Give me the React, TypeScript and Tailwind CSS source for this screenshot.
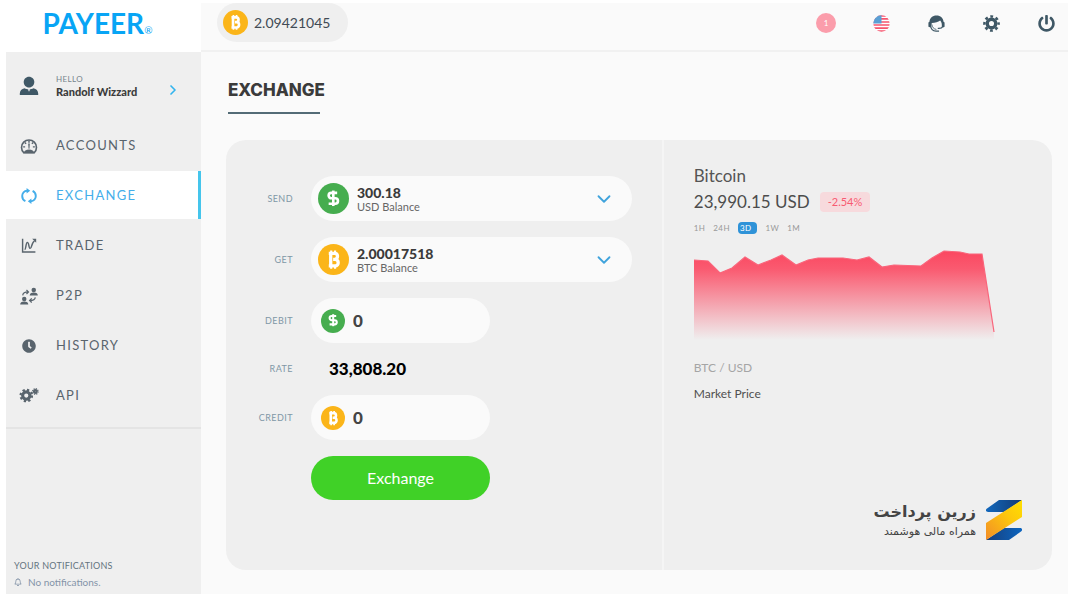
import React, { useState } from 'react';
import { clsx } from 'clsx';
import { ChevronDown, ChevronRight, DollarSign } from 'lucide-react';
import { FaClock, FaPowerOff, FaRegBell } from 'react-icons/fa';

type IconProps = { className?: string };

const UserIcon = ({ className }: IconProps) => (
    <svg viewBox="0 0 20 20" className={className} fill="currentColor" aria-hidden="true">
        <path d="M10 .8c3 0 5.300 2.300 5.300 5.300S13 11.600 10 11.600 4.700 9.100 4.700 6.100 7 .8 10 .8Z" />
        <path d="M5.500 12.200c1.200.7 2.700 1.200 4.500 1.200s3.300-.5 4.500-1.200c2.900.4 4.700 2.700 4.700 5.200V19H.8v-1.600c0-2.500 1.800-4.800 4.700-5.200Z" />
        <path d="m8.800 13.300 1.200 2.500 1.200-2.500Z" fill="#efefef" />
    </svg>
);

const GaugeIcon = ({ className }: IconProps) => (
    <svg viewBox="0 0 20 20" className={className} fill="none" stroke="currentColor" aria-hidden="true">
        <path d="M4.200 17.500A8.300 8.300 0 1 1 15.800 17.500Z" strokeWidth="1.800" />
        <path d="M10 4v2.300M5.300 6l1.500 1.500M14.700 6l-1.500 1.500M3.500 11h2.200M14.300 11h2.200" strokeWidth="1.600" />
        <path d="m10 13-.6-5.500h1.200Z" strokeWidth=".6" fill="currentColor" />
        <path d="M3.500 18c1-2.200 3.500-4 6.500-4s5.500 1.800 6.500 4Z" fill="currentColor" stroke="none" />
    </svg>
);

const SwapIcon = ({ className }: IconProps) => (
    <svg viewBox="0 0 20 20" className={className} fill="none" stroke="currentColor" strokeWidth="2.400" aria-hidden="true">
        <path d="M5.500 16.500C3 15.300 1.500 12.900 1.500 10c0-3.700 2.500-6.500 6-6.500" />
        <path d="M14.500 3.500c2.500 1.200 4 3.600 4 6.500 0 3.700-2.500 6.500-6 6.500" />
        <path d="m7 0 4.500 3.500L7 7ZM13 13l-4.500 3.500L13 20Z" fill="currentColor" stroke="none" />
    </svg>
);

const TradeIcon = ({ className }: IconProps) => (
    <svg viewBox="0 0 20 20" className={className} fill="none" stroke="currentColor" strokeWidth="1.800" aria-hidden="true">
        <path d="M2 1v16.500h16" />
        <path d="M4.500 14.500c2 0 1.300-9 3.500-9s1.500 7.500 3.500 7.500 1.800-8 5.500-9.500" />
        <path d="M14 1h5v5Z" fill="currentColor" stroke="none" />
    </svg>
);

const PeerIcon = ({ className }: IconProps) => (
    <svg viewBox="0 0 20 20" className={className} fill="currentColor" aria-hidden="true">
        <circle cx="15.300" cy="3.300" r="2.500" />
        <path d="M10.800 9.500c0-2.300 1.500-3.500 4.500-3.500s4.500 1.200 4.500 3.500Z" />
        <circle cx="4.700" cy="13.300" r="2.500" />
        <path d="M.2 19.500C.2 17.200 1.700 16 4.700 16s4.500 1.200 4.500 3.500Z" />
        <g fill="none" stroke="currentColor" strokeWidth="1.400">
            <path d="M3 9.300C3.300 6.800 5 5.500 9 5.500M7.200 3.300l2.200 2.200-2.200 2.200" />
            <path d="M17 11.500c-.3 2.500-2 3.500-6 3.500M13 12.600l-2.300 2.400 2.300 2.300" />
        </g>
    </svg>
);

const GearsIcon = ({ className }: IconProps) => (
    <svg viewBox="0 0 22 20" className={className} fill="none" stroke="currentColor" aria-hidden="true">
        <circle cx="8" cy="9.500" r="4" strokeWidth="3.400" />
        <circle cx="8" cy="9.500" r="6.300" strokeWidth="2.400" strokeDasharray="2.500 2.450" />
        <circle cx="18" cy="5" r="1.500" strokeWidth="2.400" />
        <circle cx="18" cy="5" r="3" strokeWidth="1.400" strokeDasharray="1.300 1.060" />
    </svg>
);

const CogIcon = ({ className }: IconProps) => (
    <svg viewBox="0 0 20 20" className={className} fill="none" stroke="currentColor" aria-hidden="true">
        <circle cx="10" cy="10" r="5" strokeWidth="4" />
        <circle cx="10" cy="10" r="8.300" strokeWidth="3" strokeDasharray="3.300 3.219" strokeDashoffset="1.650" />
    </svg>
);

const SupportIcon = ({ className }: IconProps) => (
    <svg viewBox="0 0 20 20" className={className} fill="none" stroke="currentColor" aria-hidden="true">
        <path d="M10 .5c4.800 0 8 3 8.300 7.300l1.200 1v5l-1.800 1-1.500-1c.4-3-.2-5.300-1.900-7.300C12 8 8.500 9.500 4.500 9.500L3.200 14.800l-2.700-1v-5l1.200-1C2 3.500 5.200.5 10 .5Z" fill="currentColor" stroke="none" />
        <path d="M3 12c.3 3.800 2.700 6.800 6.500 7h3.500" strokeWidth="1.500" />
        <path d="M4.500 11c.3 3.300 2.300 5.500 5.300 6" strokeWidth="1" />
        <path d="M17.500 13.500c-1 1.900-3 2.600-6 2.300" strokeWidth="1.500" />
    </svg>
);

const FlagIcon = ({ className }: IconProps) => (
    <svg viewBox="0 0 18 18" className={className} aria-hidden="true">
        <clipPath id="flag"><circle cx="9" cy="9" r="8.700" /></clipPath>
        <g clipPath="url(#flag)">
            <path fill="#fff" d="M0 0h18v18H0z" />
            <path stroke="#f6546e" strokeWidth="1.800" d="M0 1h18M0 4.200h18M0 7.400h18M0 10.600h18M0 13.800h18M0 17h18" />
            <path fill="#5a9fd4" d="M0 0h9v9H0z" />
        </g>
    </svg>
);

const Coin = ({ kind, className }: { kind: 'usd' | 'btc', className?: string }) => (
    <span className={clsx("flex shrink-0 items-center justify-center rounded-full text-white", kind === 'usd' ? 'bg-[#46ad4f]' : 'bg-[#fbb519]', className)}>
        {
            kind === 'usd' ? <DollarSign className="size-3/5" strokeWidth={3.4} strokeLinecap="butt" /> : (
                <svg viewBox="0 0 24 24" className="size-3/4" fill="none" stroke="currentColor" strokeWidth="3.400" aria-hidden="true">
                    <path d="M9 5.500v13M7 5.500h6c4 0 4 6.200 0 6.200h-1.500 2c4.300 0 4.300 6.800 0 6.800H7" />
                    <path d="M9.500 2.500v3M13.500 2.500v3M9.500 18.500v3M13.500 18.500v3" strokeWidth="2.200" />
                </svg>
            )
        }
    </span>
);

const NAV = [
    { name: 'ACCOUNTS', icon: <GaugeIcon className="size-[18px]" /> },
    { name: 'EXCHANGE', icon: <SwapIcon className="size-4" /> },
    { name: 'TRADE', icon: <TradeIcon className="size-4" /> },
    { name: 'P2P', icon: <PeerIcon className="size-[18px]" /> },
    { name: 'HISTORY', icon: <FaClock className="size-[14px]" /> },
    { name: 'API', icon: <GearsIcon className="size-5" /> },
];

function Sidebar() {
    return (
        <aside className="flex w-[195px] shrink-0 flex-col bg-[#efefef]">
            <a href="#" className="flex h-[49px] items-start justify-center bg-white pr-3 text-[#08a5f5]">
                <span className="text-[28px] leading-10 font-bold">PAYEER</span>
                <span className="self-end pb-4 text-[10px] leading-3">®</span>
            </a>
            <a href="#profile" className="flex h-[69px] items-center pr-5 pb-0.5 pl-[13px]">
                <UserIcon className="size-5 text-[#3f5866]" />
                <span className="ml-[17px] flex-1">
                    <span className="block text-[8px] leading-3 tracking-wider text-[#76848d]">HELLO</span>
                    <span className="block text-[11px] leading-3.5 font-black text-[#3c3c3c]">Randolf Wizzard</span>
                </span>
                <ChevronRight className="mt-2 size-4 text-[#32b4ee]" strokeWidth={2.5} />
            </a>
            <nav className="flex flex-col gap-0.5 border-b-2 border-[#e4e4e4] pb-2">
                {NAV.map((item) => (
                    <a
                        key={item.name}
                        href={'#' + item.name.toLowerCase()}
                        className={clsx("flex h-12 items-center gap-[17px] border-r-3 pt-0.5 pl-[13px] text-[13px] tracking-widest", item.name === 'EXCHANGE' ? 'border-[#45c5ec] bg-white text-[#45aeea]' : 'border-transparent text-[#59646d]')}
                    >
                        <span className="flex w-5 justify-center">{item.icon}</span>
                        {item.name}
                    </a>
                ))}
            </nav>
            <div className="mt-auto px-2 pb-1">
                <p className="text-[9px] leading-4 tracking-wide text-[#647480]">YOUR NOTIFICATIONS</p>
                <p className="flex items-center gap-1.5 text-[10px] leading-4 text-[#8494a8]">
                    <FaRegBell className="size-2" />
                    No notifications.
                </p>
            </div>
        </aside>
    );
}

function Header() {
    return (
        <header className="flex h-[49px] items-start justify-between border-b-2 border-[#f1f1f1] pr-3 pl-4">
            <div className="flex h-[39px] items-center gap-1.5 rounded-full bg-[#efefef] pr-[18px] pl-1.5 text-[14px] text-[#414b55]">
                <Coin kind="btc" className="size-[25px]" />
                2.09421045
            </div>
            <div className="flex h-10 items-center gap-[35px] text-[#3f5866]">
                <button aria-label="Notifications" className="flex size-5 items-center justify-center rounded-full bg-[#fb9dab] text-[8px] text-white">1</button>
                <button aria-label="Language" className="flex size-5 items-center justify-center"><FlagIcon className="size-[17px]" /></button>
                <button aria-label="Support" className="flex size-5 items-center justify-center"><SupportIcon className="size-[17px]" /></button>
                <button aria-label="Settings" className="flex size-5 items-center justify-center"><CogIcon className="size-[17px]" /></button>
                <button aria-label="Log out" className="flex size-5 items-center justify-center"><FaPowerOff className="size-[17px]" /></button>
            </div>
        </header>
    );
}

const labelStyle = "text-right text-[9px] tracking-wider text-[#8097a6]";

interface BalanceProps {
    id: string
    label: string
    kind: 'usd' | 'btc'
    amount: string
    caption: string
}

const BalanceSelect: React.FC<BalanceProps> = ({ id, label, kind, amount, caption }) => (
    <>
        <label htmlFor={id} className={labelStyle}>{label}</label>
        <div className="flex h-[45px] items-center rounded-full bg-[#fafafa] pr-[17px] pl-[7px]">
            <Coin kind={kind} className="size-[31px]" />
            <div className="ml-2 flex-1">
                <select id={id} className="block w-full appearance-none text-[14px] leading-4 font-black text-[#3b3b3b]">
                    <option>{amount}</option>
                </select>
                <p className="text-[11px] leading-3 text-[#666]">{caption}</p>
            </div>
            <ChevronDown className="size-[22px] text-[#3fa3dc]" />
        </div>
    </>
);

const AmountInput: React.FC<{ id: string, label: string, kind: 'usd' | 'btc' }> = ({ id, label, kind }) => {
    const [value, setValue] = useState('0');
    return (
        <>
            <label htmlFor={id} className={labelStyle}>{label}</label>
            <div className="flex h-[45px] w-[179px] items-center gap-2 rounded-full bg-[#fafafa] px-2.5">
                <Coin kind={kind} className="size-6" />
                <input id={id} value={value} onChange={(e) => setValue(e.target.value)} className="w-full min-w-0 text-[17px] font-black text-[#444] outline-none" />
            </div>
        </>
    );
};

function ExchangeForm() {
    return (
        <form onSubmit={(e) => e.preventDefault()} className="grid grid-cols-[67px_1fr] content-start items-center gap-x-[18px] gap-y-4 border-r-2 border-[#f5f5f5] pt-9 pr-[30px]">
            <BalanceSelect id="send" label="SEND" kind="usd" amount="300.18" caption="USD Balance" />
            <BalanceSelect id="get" label="GET" kind="btc" amount="2.00017518" caption="BTC Balance" />
            <AmountInput id="debit" label="DEBIT" kind="usd" />
            <span className={labelStyle}>RATE</span>
            <output className="pl-[18px] text-[17px] leading-5 font-black text-black">33,808.20</output>
            <AmountInput id="credit" label="CREDIT" kind="btc" />
            <button type="submit" className="col-start-2 h-11 w-[179px] rounded-full bg-[#40d127] text-[16px] text-white">Exchange</button>
        </form>
    );
}

const PRICE_LINE = "M0 12 14 13 26 25 38 20 51 9 64 17 77 12 88 7 102 17 114 12 124 10 149 10 163 12 175 9 188 19 200 17 227 18 238 10 250 3 266 4 275 6 288 6 300 84";

function BrandMark() {
    return (
        <div className="mt-auto flex items-center justify-end gap-2.5">
            <div dir="rtl" lang="fa" className="font-['DejaVu_Sans',sans-serif] text-[#444]">
                <p className="text-[16px] leading-6 font-bold">زرین پرداخت</p>
                <p className="text-[11px] leading-4">همراه مالی هوشمند</p>
            </div>
            <svg viewBox="0 0 36 40" className="h-10 w-9" aria-hidden="true">
                <defs>
                    <linearGradient id="blueTop"><stop stopColor="#1268bd" /><stop offset="1" stopColor="#123a73" /></linearGradient>
                    <linearGradient id="blueBottom"><stop stopColor="#173f7c" /><stop offset="1" stopColor="#0c65c0" /></linearGradient>
                    <linearGradient id="gold" x1="0" y1="1" x2="1" y2="0"><stop stopColor="#f28c28" /><stop offset=".6" stopColor="#fdc70c" /><stop offset="1" stopColor="#ffe000" /></linearGradient>
                </defs>
                <path d="M13 0h23L18 12H2C0 12-1 10 1 8.500Z" fill="url(#blueTop)" />
                <path d="M23 40H0l18-12h16c2 0 3 2 1 3.500Z" fill="url(#blueBottom)" />
                <path d="M36 0v17L0 40V23Z" fill="url(#gold)" />
            </svg>
        </div>
    );
}

function MarketPanel() {
    const [range, setRange] = useState('3D');
    return (
        <section className="flex flex-col px-[30px] pt-[22px] pb-[30px]">
            <h2 className="text-[17px] leading-7 text-[#555]">Bitcoin</h2>
            <div className="flex h-6 items-center gap-2.5">
                <p className="text-[17px] text-[#4c4c4c]">23,990.15 USD</p>
                <span className="rounded-sm bg-[#f7dadd] px-2 text-[11px] leading-5 text-[#f75a72]">-2.54%</span>
            </div>
            <div className="mt-2 flex h-3 items-center gap-2">
                {['1H', '24H', '3D', '1W', '1M'].map((item) => (
                    <button
                        key={item}
                        onClick={() => setRange(item)}
                        className={clsx("rounded-sm text-left text-[8px] leading-3 tracking-wider", range === item ? 'bg-[#2f93d8] pr-1.5 pl-0.5 text-white' : 'text-[#999]')}
                    >
                        {item}
                    </button>
                ))}
            </div>
            <svg viewBox="0 0 302 94" className="mt-3.5 h-[94px] w-[302px]" aria-hidden="true">
                <linearGradient id="fade" x1="0" y1="0" x2="0" y2="1">
                    <stop stopColor="#fb4760" />
                    <stop offset=".2" stopColor="#fa5a70" />
                    <stop offset="1" stopColor="#fa5a70" stopOpacity="0" />
                </linearGradient>
                <path d={PRICE_LINE + "V92H0Z"} fill="url(#fade)" />
                <path d={PRICE_LINE} fill="none" stroke="#f9657b" strokeWidth="1.200" />
            </svg>
            <p className="mt-4 text-[12px] leading-5 text-[#a5a5a5]">BTC / USD</p>
            <p className="mt-1.5 text-[12px] leading-5 text-[#505050]">Market Price</p>
            <BrandMark />
        </section>
    );
}

export default function App() {
    return (
        <div className="flex min-h-screen bg-white px-1.5 py-[3px] font-[Lato,sans-serif]">
            <Sidebar />
            <div className="flex min-w-0 flex-1 flex-col bg-[#fafafa]">
                <Header />
                <main className="flex flex-1 flex-col pr-4 pb-6 pl-[25px]">
                    <div className="px-0.5 pt-7">
                        <h1 className="text-[17px] leading-5 font-extrabold font-[Inter,sans-serif] text-[#3b3b3b]">EXCHANGE</h1>
                        <div className="mt-3 h-0.5 w-[92px] bg-[#536b76]" />
                    </div>
                    <div className="mt-[26px] grid flex-1 grid-cols-[53fr_47fr] rounded-[20px] bg-[#efefef]">
                        <ExchangeForm />
                        <MarketPanel />
                    </div>
                </main>
            </div>
        </div>
    );
}
